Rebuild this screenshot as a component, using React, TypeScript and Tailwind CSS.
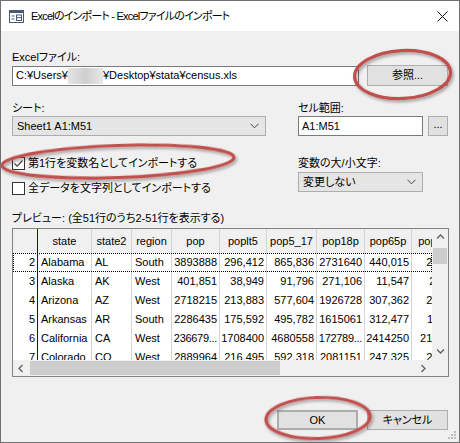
import type { ReactNode } from 'react';

const cols = [
  { label: '', w: 25, align: 'right' },
  { label: 'state', w: 54, align: 'left' },
  { label: 'state2', w: 40, align: 'left' },
  { label: 'region', w: 40, align: 'left' },
  { label: 'pop', w: 48, align: 'right' },
  { label: 'poplt5', w: 47, align: 'right' },
  { label: 'pop5_17', w: 50, align: 'right' },
  { label: 'pop18p', w: 48, align: 'right' },
  { label: 'pop65p', w: 47, align: 'right' },
  { label: 'popurban', w: 60, align: 'right' },
];

const rows = [
  ['2', 'Alabama', 'AL', 'South', '3893888', '296,412', '865,836', '2731640', '440,015', '2337713'],
  ['3', 'Alaska', 'AK', 'West', '401,851', '38,949', '91,796', '271,106', '11,547', '258,567'],
  ['4', 'Arizona', 'AZ', 'West', '2718215', '213,883', '577,604', '1926728', '307,362', '2278728'],
  ['5', 'Arkansas', 'AR', 'South', '2286435', '175,592', '495,782', '1615061', '312,477', '1179556'],
  ['6', 'California', 'CA', 'West', '236679...', '1708400', '4680558', '172789...', '2414250', '21607606'],
  ['7', 'Colorado', 'CO', 'West', '2889964', '216,495', '592,318', '2081151', '247,325', '2329869'],
];

function Chevron({ dir }: { dir: 'up' | 'down' | 'left' | 'right' }) {
  const d = {
    up: 'M1 5.5 L4.5 2 L8 5.5',
    down: 'M1 2.5 L4.5 6 L8 2.5',
    left: 'M5.5 1 L2 4.5 L5.5 8',
    right: 'M2.5 1 L6 4.5 L2.5 8',
  }[dir];
  return (
    <svg width="9" height="9" viewBox="0 0 9 9">
      <path d={d} fill="none" stroke="#606060" strokeWidth="1.3" />
    </svg>
  );
}

function Select({ value, className }: { value: string; className: string }) {
  return (
    <div className={`flex h-[20px] items-center justify-between border border-[#adadad] bg-[#e5e5e5] pl-[4px] pr-[6px] ${className}`}>
      <span>{value}</span>
      <svg width="9" height="6" viewBox="0 0 9 6">
        <path d="M0.5 0.8 L4.5 4.8 L8.5 0.8" fill="none" stroke="#444" strokeWidth="1" />
      </svg>
    </div>
  );
}

function Button({ children, className }: { children: ReactNode; className: string }) {
  return (
    <div className={`flex items-center justify-center border border-[#adadad] bg-[#e1e1e1] ${className}`}>
      {children}
    </div>
  );
}

function Checkbox({ checked, label }: { checked: boolean; label: string }) {
  return (
    <div className="flex h-[15px] items-center gap-[3px]">
      <div className="flex h-[13px] w-[13px] items-center justify-center border border-[#333] bg-white">
        {checked && (
          <svg width="11" height="11" viewBox="0 0 11 11">
            <path d="M1.5 5.5 L4.2 8.2 L9.5 2.5" fill="none" stroke="#444" strokeWidth="1.2" />
          </svg>
        )}
      </div>
      <span>{label}</span>
    </div>
  );
}

export default function App() {
  return (
    <div className="relative h-[443px] w-[460px] overflow-hidden border border-[#707070] bg-[#f0f0f0] font-['Liberation_Sans','Noto_Sans_CJK_JP',sans-serif] text-[11px] leading-[15px] text-black [font-feature-settings:'palt']">
      {/* title bar */}
      <div className="flex h-[30px] items-center bg-white">
        <svg className="ml-[8px]" width="15" height="13" viewBox="0 0 15 13">
          <rect x="0.5" y="0.5" width="14" height="12" fill="#fff" stroke="#4a5a75" />
          <rect x="0.5" y="0.5" width="14" height="2.5" fill="#4a5a75" />
          <path d="M2.5 6 H5.5 M2.5 9 H5.5" stroke="#4a5a75" />
          <rect x="7.5" y="5" width="5" height="5.5" fill="none" stroke="#4a5a75" />
          <path d="M7.5 7.7 H12.5" stroke="#4a5a75" />
        </svg>
        <span className="ml-[7px] text-[11px] tracking-[-0.8px]">Excelのインポート - Excelファイルのインポート</span>
        <svg className="ml-auto mr-[11px]" width="11" height="11" viewBox="0 0 11 11">
          <path d="M0.5 0.5 L10.5 10.5 M10.5 0.5 L0.5 10.5" stroke="#111" strokeWidth="1" />
        </svg>
      </div>

      <div className="px-[11px]">
        <div className="mt-[19px]">Excelファイル:</div>
        <div className="flex h-[21px] items-center justify-between">
          <div className="flex h-[20px] w-[347px] items-center border border-[#7a7a7a] bg-white pl-[3px]">
            <span>C:¥Users¥</span>
            <span className="h-[16px] w-[35px] bg-gradient-to-r from-[#e4e4e4] via-[#cfcfcf] to-[#e8e8e8]" />
            <span>¥Desktop¥stata¥census.xls</span>
          </div>
          <Button className="h-[21px] w-[81px]">参照...</Button>
        </div>

        <div className="mt-[15px] flex gap-[32px]">
          <div className="flex w-[254px] flex-col">
            <div>シート:</div>
            <Select value="Sheet1 A1:M51" className="w-[254px]" />
            <div className="mt-[20px]">
              <Checkbox checked label="第1行を変数名としてインポートする" />
            </div>
            <div className="mt-[10px]">
              <Checkbox checked={false} label="全データを文字列としてインポートする" />
            </div>
          </div>
          <div className="flex w-[150px] flex-col">
            <div>セル範囲:</div>
            <div className="flex items-center gap-[5px]">
              <div className="flex h-[20px] w-[125px] items-center border border-[#7a7a7a] bg-white pl-[3px]">A1:M51</div>
              <Button className="h-[20px] w-[20px] pb-[4px]">...</Button>
            </div>
            <div className="mt-[20px]">変数の大/小文字:</div>
            <Select value="変更しない" className="mt-[1px] w-[125px]" />
          </div>
        </div>

        <div className="mt-[15px]">プレビュー: (全51行のうち2-51行を表示する)</div>

        {/* preview grid */}
        <div className="mt-[2px] flex h-[149px] w-[437px] flex-col border border-[#828282] bg-white">
          <div className="flex min-h-0 flex-1">
            <div className="min-w-0 flex-1 overflow-hidden">
              <div className="flex h-[24px] bg-[#f0f0f0]">
                {cols.map((c, i) => (
                  <div
                    key={i}
                    style={{ width: c.w }}
                    className={`flex shrink-0 items-center justify-center border-r ${i === 0 ? 'border-[#0000c8]' : 'border-[#d4d4d4]'}`}
                  >
                    {c.label}
                  </div>
                ))}
              </div>
              {rows.map((r, ri) => (
                <div
                  key={ri}
                  className={`flex h-[19px] ${ri === 0 ? 'outline-1 -outline-offset-1 outline-black outline-dotted' : ''}`}
                >
                  {r.map((v, ci) => (
                    <div
                      key={ci}
                      style={{ width: cols[ci].w }}
                      className={`flex shrink-0 items-center overflow-hidden whitespace-nowrap border-r ${
                        ci === 0 ? 'border-[#0000c8]' : 'border-[#d4d4d4]'
                      } ${cols[ci].align === 'right' ? 'justify-end pr-[2px]' : 'pl-[3px]'} ${
                        v.endsWith('...') ? 'tracking-[-0.3px]' : ''
                      }`}
                    >
                      {v}
                    </div>
                  ))}
                </div>
              ))}
            </div>
            <div className="flex w-[16px] flex-col bg-[#f0f0f0]">
              <div className="flex h-[17px] items-center justify-center">
                <Chevron dir="up" />
              </div>
              <div className="mx-[1px] mt-[2px] h-[16px] bg-[#cdcdcd]" />
              <div className="flex-1" />
              <div className="flex h-[17px] items-center justify-center">
                <Chevron dir="down" />
              </div>
            </div>
          </div>
          <div className="flex h-[16px] bg-[#f0f0f0]">
            <div className="flex w-[17px] items-center justify-center">
              <Chevron dir="left" />
            </div>
            <div className="my-[1px] w-[250px] bg-[#cdcdcd]" />
            <div className="flex-1" />
            <div className="flex w-[17px] items-center justify-center">
              <Chevron dir="right" />
            </div>
            <div className="w-[16px]" />
          </div>
        </div>

        <div className="mt-[33px] flex justify-end gap-[9px]">
          <Button className="h-[20px] w-[81px] border-2 border-[#0078d7]">OK</Button>
          <Button className="h-[20px] w-[81px]">キャンセル</Button>
        </div>
      </div>

      {/* resize grip */}
      <svg className="absolute bottom-[2px] right-[2px]" width="10" height="10" viewBox="0 0 10 10">
        {[
          [8, 2],
          [5, 5],
          [8, 5],
          [2, 8],
          [5, 8],
          [8, 8],
        ].map(([x, y], i) => (
          <rect key={i} x={x - 1} y={y - 1} width="2" height="2" fill="#bcbcbc" />
        ))}
      </svg>

      {/* annotation ellipses */}
      <svg className="pointer-events-none absolute left-[-1px] top-[-1px]" width="460" height="443" viewBox="0 0 460 443">
        <defs>
          <filter id="sh" x="-20%" y="-40%" width="140%" height="180%">
            <feDropShadow dx="1.5" dy="2" stdDeviation="1.5" floodColor="#000" floodOpacity="0.35" />
          </filter>
        </defs>
        <g fill="none" stroke="#c0504d" strokeWidth="3.2" filter="url(#sh)">
          <ellipse cx="402.5" cy="74.5" rx="48" ry="24" transform="rotate(-3 402.5 74.5)" />
          <ellipse cx="118" cy="161.5" rx="116" ry="16" transform="rotate(-2 118 161.5)" />
          <ellipse cx="318" cy="418" rx="52" ry="20.5" transform="rotate(-2 318 418)" />
        </g>
      </svg>
    </div>
  );
}
